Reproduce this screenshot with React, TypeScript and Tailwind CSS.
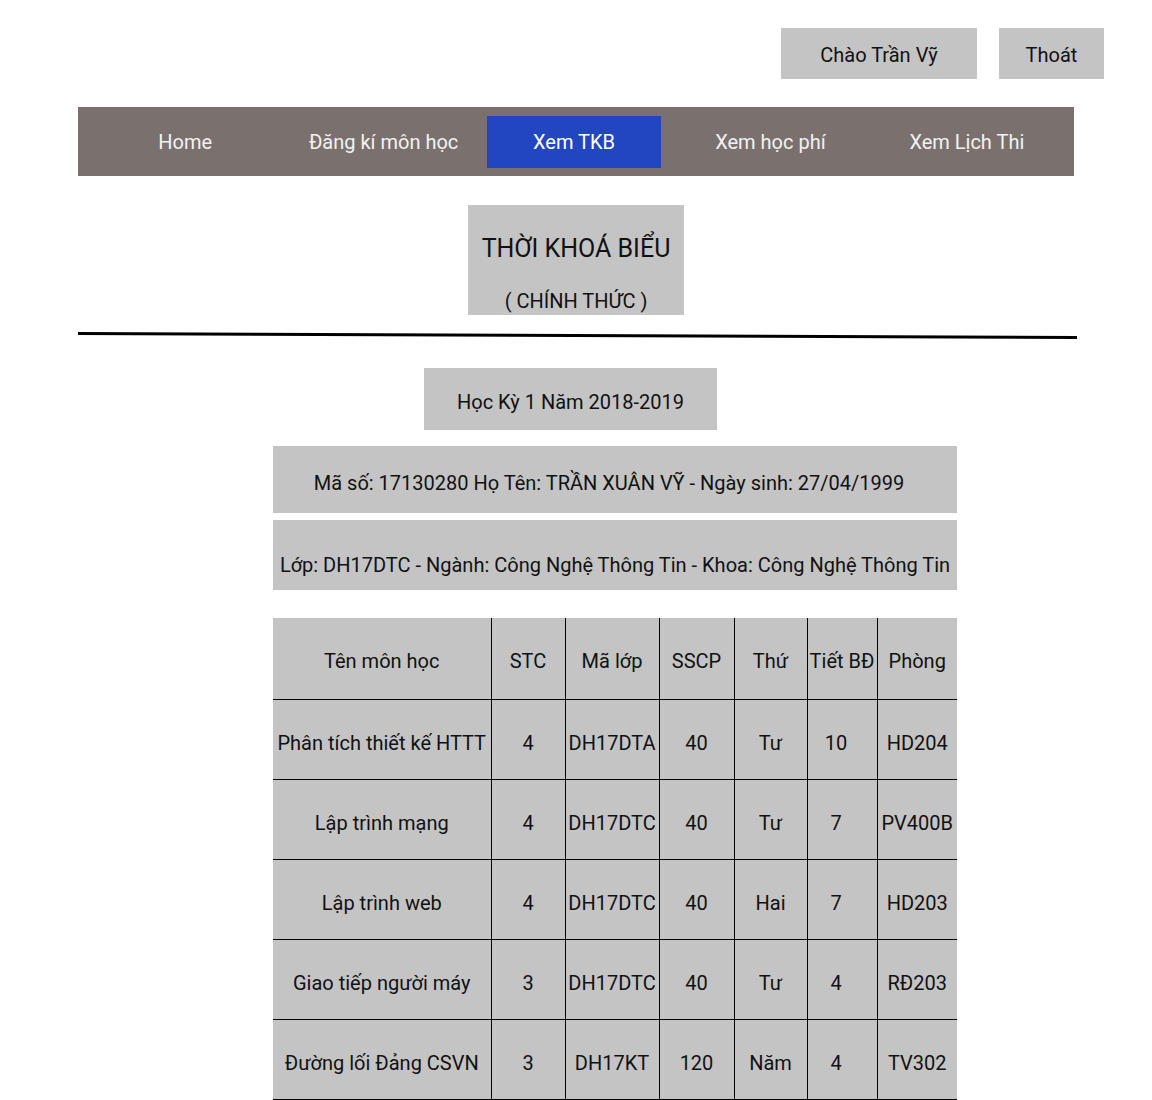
const navItems = ["Home", "Đăng kí môn học", "Xem TKB", "Xem học phí", "Xem Lịch Thi"];

const columns = [
  { title: "Tên môn học", w: "w-[218px]" },
  { title: "STC", w: "w-[74px]" },
  { title: "Mã lớp", w: "w-[94px]" },
  { title: "SSCP", w: "w-[75px]" },
  { title: "Thứ", w: "w-[73px]" },
  { title: "Tiết BĐ", w: "w-[70px]" },
  { title: "Phòng", w: "w-[80px]" },
];

const rows = [
  ["Phân tích thiết kế HTTT", "4", "DH17DTA", "40", "Tư", "10", "HD204"],
  ["Lập trình mạng", "4", "DH17DTC", "40", "Tư", "7", "PV400B"],
  ["Lập trình web", "4", "DH17DTC", "40", "Hai", "7", "HD203"],
  ["Giao tiếp người máy", "3", "DH17DTC", "40", "Tư", "4", "RĐ203"],
  ["Đường lối Đảng CSVN", "3", "DH17KT", "120", "Năm", "4", "TV302"],
];

function App() {
  return (
    <div className="min-h-screen bg-white text-[#111] font-['Roboto',sans-serif] text-[20px] pb-10">
      <div className="flex justify-end gap-[22px] pt-[28px] pr-[48px]">
        <div className="w-[196px] h-[51px] bg-[#c4c4c4] flex items-center justify-center pt-[2px]">Chào Trần Vỹ</div>
        <div className="w-[105px] h-[51px] bg-[#c4c4c4] flex items-center justify-center pt-[2px]">Thoát</div>
      </div>

      <nav className="mx-[78px] mt-[28px] h-[69px] bg-[#7a716f] flex items-center px-[20px]">
        {navItems.map((item, i) => (
          <div
            key={item}
            className={
              (i === 0 ? "" : i === 1 ? "ml-[24px] " : i === 2 ? "ml-[16px] " : "ml-[22px] ") +
              (item === "Xem TKB"
                ? "w-[175px] h-[52px] flex items-center justify-center text-white bg-[#2246bf]"
                : "w-[175px] h-[52px] flex items-center justify-center text-[#f2f2f2]")
            }
          >
            {item}
          </div>
        ))}
      </nav>

      <div className="flex justify-center mt-[29px]">
        <div className="w-[216px] h-[110px] bg-[#c4c4c4] flex flex-col items-center pt-[28px]">
          <div className="text-[25px] leading-[32px]">THỜI KHOÁ BIỂU</div>
          <div className="mt-[24px] leading-[24px]">( CHÍNH THỨC )</div>
        </div>
      </div>

      <div className="ml-[78px] mt-[19px] w-[999px] h-[3px] bg-black rotate-[0.23deg]"></div>

      <div className="ml-[424px] mt-[31px] w-[293px] h-[62px] bg-[#c4c4c4] flex items-center justify-center pt-[6px]">
        Học Kỳ 1 Năm 2018-2019
      </div>

      <div className="ml-[273px] w-[684px]">
        <div className="mt-[16px] h-[67px] bg-[#c4c4c4] flex items-center justify-center pt-[7px] pr-[12px]">
          Mã số: 17130280 Họ Tên: TRẦN XUÂN VỸ - Ngày sinh: 27/04/1999
        </div>
        <div className="mt-[7px] h-[70px] bg-[#c4c4c4] flex items-center justify-center pt-[20px] whitespace-nowrap">
          Lớp: DH17DTC - Ngành: Công Nghệ Thông Tin - Khoa: Công Nghệ Thông Tin
        </div>

        <table className="mt-[28px] w-[684px] table-fixed border-collapse bg-[#c4c4c4]">
          <thead>
            <tr className="h-[81px] border-b border-black">
              {columns.map((c, i) => (
                <th
                  key={c.title}
                  className={`${c.w} font-normal text-center p-0 pt-[6px] ${i < columns.length - 1 ? "border-r border-black" : ""}`}
                >
                  {c.title}
                </th>
              ))}
            </tr>
          </thead>
          <tbody>
            {rows.map((r, ri) => (
              <tr key={ri} className="h-[80px] border-b border-black">
                {r.map((cell, i) => (
                  <td
                    key={i}
                    className={`text-center p-0 pt-[8px] whitespace-nowrap ${i === 5 ? "pr-[12px]" : ""} ${i < r.length - 1 ? "border-r border-black" : ""}`}
                  >
                    {cell}
                  </td>
                ))}
              </tr>
            ))}
          </tbody>
        </table>
      </div>
    </div>
  );
}

export default App;
